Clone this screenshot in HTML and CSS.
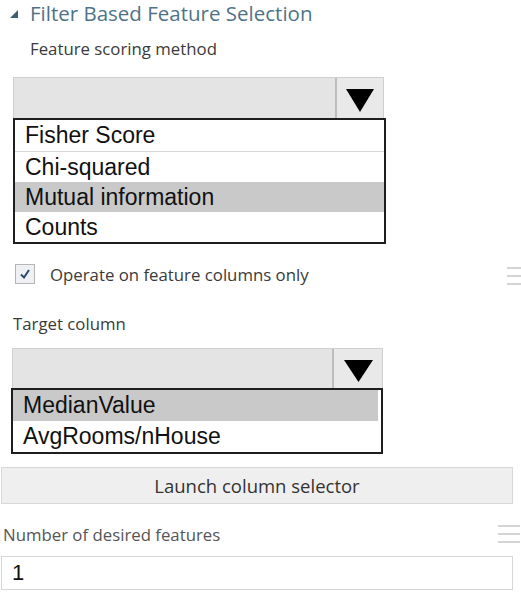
FILE: index.html
```html
<!DOCTYPE html>
<html>
<head>
<meta charset="utf-8">
<link rel="stylesheet" href="styles.css">
</head>
<body>
<div class="page">
  <div class="header">
    <svg class="caret" width="8" height="8" viewBox="0 0 8 8"><polygon points="8,0 8,8 0,8" fill="#3f5f70"/></svg>
    <span class="header-text">Filter Based Feature Selection</span>
  </div>
  <div class="label label-scoring">Feature scoring method</div>
  <div class="combo combo-scoring">
    <div class="select">
      <div class="select-field"></div>
      <div class="select-btn">
        <svg width="28" height="23" viewBox="0 0 28 23"><polygon points="0,0 28,0 14,23" fill="#000"/></svg>
      </div>
    </div>
    <div class="list list-scoring">
      <div class="item sep">Fisher Score</div>
      <div class="item">Chi-squared</div>
      <div class="item selected">Mutual information</div>
      <div class="item">Counts</div>
    </div>
  </div>
  <div class="check-row">
    <div class="checkbox">
      <svg width="12" height="12" viewBox="0 0 12 12"><path d="M2 6.5 L5 9.5 L10 2" stroke="#2d4a66" stroke-width="2" fill="none"/></svg>
    </div>
    <span class="check-text">Operate on feature columns only</span>
    <div class="menu menu-1"><span></span><span></span><span></span></div>
  </div>
  <div class="label label-target">Target column</div>
  <div class="combo combo-target">
    <div class="select select-target">
      <div class="select-field"></div>
      <div class="select-btn">
        <svg width="29" height="22" viewBox="0 0 29 22"><polygon points="0,0 29,0 14.5,22" fill="#000"/></svg>
      </div>
    </div>
    <div class="list list-target">
      <div class="item selected inset">MedianValue</div>
      <div class="item">AvgRooms/nHouse</div>
    </div>
  </div>
  <div class="button">Launch column selector</div>
  <div class="num-row">
    <span class="label label-num">Number of desired features</span>
    <div class="menu menu-2"><span></span><span></span><span></span></div>
  </div>
  <div class="input">1</div>
</div>
</body>
</html>
```

FILE: styles.css
```css
html, body {
  margin: 0;
  padding: 0;
  background: #ffffff;
}
.page {
  width: 521px;
  height: 593px;
  overflow: hidden;
  display: flex;
  flex-direction: column;
  font-family: "Open Sans", "Noto Sans", sans-serif;
}
.header {
  display: flex;
  align-items: center;
  height: 26px;
  padding-left: 10px;
}
.caret {
  margin-right: 12px;
  margin-top: 2px;
}
.header-text {
  font-size: 20.5px;
  line-height: 26px;
  color: #4f7386;
  font-weight: 500;
}
.label {
  font-size: 16.8px;
  color: #3a3a3a;
}
.label-scoring {
  margin-left: 30px;
  margin-top: 12px;
  height: 22px;
  line-height: 22px;
}
.combo {
  display: flex;
  flex-direction: column;
}
.combo-scoring {
  margin-left: 13px;
  margin-top: 17px;
  width: 373px;
}
.select {
  display: flex;
  height: 41px;
  width: 371px;
  box-sizing: border-box;
  border: 1px solid #cfcfcf;
  border-bottom: none;
  background: #e4e4e4;
}
.select-field {
  flex: 1;
}
.select-btn {
  width: 48px;
  border-left: 2px solid #bdbdbd;
  background: #e9e9e9;
  display: flex;
  justify-content: center;
  padding-top: 11px;
  box-sizing: border-box;
}
.list {
  border: 2px solid #1e1e1e;
  background: #fff;
  font-family: "Liberation Sans", Arial, sans-serif;
  font-size: 23px;
  color: #111;
}
.item {
  height: 30px;
  line-height: 30px;
  padding-left: 10px;
  white-space: nowrap;
}
.item.sep {
  border-bottom: 1px solid #d8d8d8;
  height: 31px;
}
.item.selected {
  background: #c9c9c9;
}
.check-row {
  display: flex;
  align-items: center;
  margin-top: 18px;
  height: 24px;
  padding-left: 15px;
}
.checkbox {
  width: 18px;
  height: 18px;
  border: 1px solid #b5b5b5;
  background: #eef0f4;
  display: flex;
  align-items: center;
  justify-content: center;
}
.check-text {
  margin-left: 15px;
  font-size: 16.8px;
  color: #3a3a3a;
}
.menu {
  margin-left: auto;
  display: flex;
  flex-direction: column;
  gap: 6px;
}
.menu span {
  display: block;
  height: 2px;
  background: #d4d4d4;
}
.menu-1 {
  width: 14px;
  margin-top: 4px;
}
.menu-2 {
  width: 22px;
  margin-right: 1px;
}
.label-target {
  margin-left: 13px;
  margin-top: 27px;
  height: 22px;
  line-height: 22px;
}
.combo-target {
  margin-left: 11px;
  margin-top: 13px;
  width: 372px;
}
.select-target {
  width: 371px;
  height: 40px;
  margin-left: 1px;
}
.select-target .select-btn {
  width: 50px;
}
.list-target .item {
  height: 31px;
  line-height: 31px;
  padding-left: 10px;
}
.list-target .item.inset {
  margin-right: 3px;
}
.button {
  margin-top: 13px;
  margin-left: 1px;
  width: 512px;
  height: 37px;
  box-sizing: border-box;
  border: 1px solid #d8d8d8;
  background: #efefef;
  display: flex;
  align-items: center;
  justify-content: center;
  font-size: 18.5px;
  color: #333;
}
.num-row {
  display: flex;
  align-items: center;
  margin-top: 18px;
  height: 24px;
  padding-left: 3px;
}
.label-num {
  color: #555;
}
.input {
  margin-top: 10px;
  margin-left: 1px;
  width: 512px;
  height: 34px;
  box-sizing: border-box;
  border: 1px solid #d6d6d6;
  padding-left: 10px;
  font-family: "Liberation Sans", Arial, sans-serif;
  font-size: 22px;
  line-height: 32px;
  color: #111;
}
```
